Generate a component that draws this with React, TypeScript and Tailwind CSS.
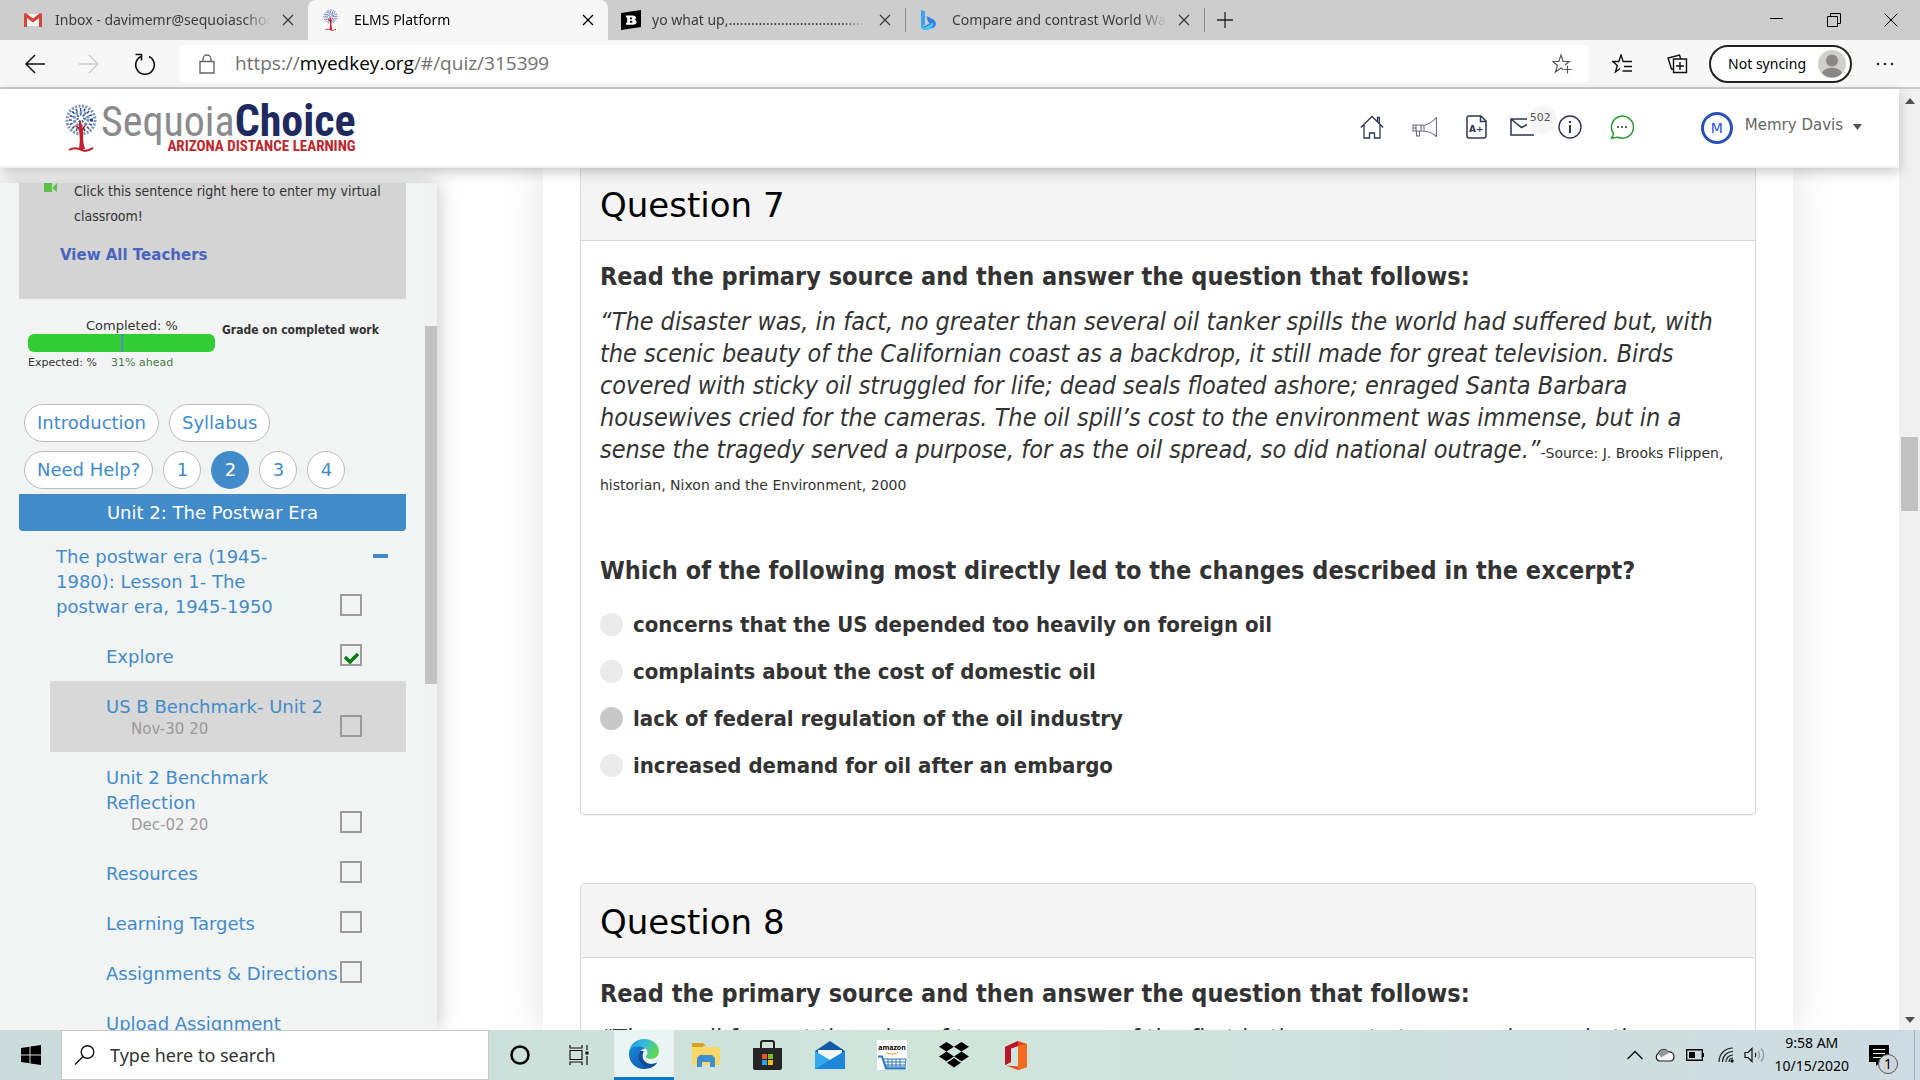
import type { ReactNode } from 'react';

const lessons = [
  { title: 'Explore', done: true },
  { title: 'US B Benchmark- Unit 2', date: 'Nov-30 20', active: true },
  { title: 'Unit 2 Benchmark Reflection', date: 'Dec-02 20' },
  { title: 'Resources' },
  { title: 'Learning Targets' },
  { title: 'Assignments & Directions' },
  { title: 'Upload Assignment', date: 'Dec-04 20' },
];

const options = [
  'concerns that the US depended too heavily on foreign oil',
  'complaints about the cost of domestic oil',
  'lack of federal regulation of the oil industry',
  'increased demand for oil after an embargo',
];

function CloseIcon() {
  return (
    <svg className="size-3" viewBox="0 0 12 12" fill="none" stroke="currentColor" strokeWidth="1.3">
      <path d="M1 1l10 10M11 1L1 11" />
    </svg>
  );
}

function TreeIcon({ className }: { className: string }) {
  return (
    <svg className={className} viewBox="0 0 32 48" fill="none">
      <circle cx="16" cy="16" r="14" stroke="#7c93bd" strokeWidth="3" strokeDasharray="2 1.5" />
      <circle cx="16" cy="16" r="10.500" stroke="#2c4a8c" strokeWidth="3" strokeDasharray="1.5 2.5" />
      <circle cx="16" cy="15" r="7" stroke="#6f8fc4" strokeWidth="3" strokeDasharray="2.500 2" />
      <circle cx="16" cy="14" r="3.500" stroke="#3b5998" strokeWidth="2.500" strokeDasharray="1.500 1.500" />
      <path d="M14 45c1-7 1-12 0-19l-5-5 5 2v-6h2l1 7 5-5-4 8c0 7 0 12 2 18z" fill="#c5202e" />
      <path d="M4 46c5-3 9-2 13 0s7 0 11-2" stroke="#c5202e" strokeWidth="2" />
    </svg>
  );
}

function GmailIcon() {
  return (
    <svg className="h-[14px] w-[18px]" viewBox="0 0 18 14">
      <path d="M1 1h16v12H1z" fill="#f2f2f2" />
      <path d="M0 1.500V14h3V5l6 4.500L15 5v9h3V1.500C18 0 16.500-.2 15.500.6L9 5.500 2.500.6C1.500-.2 0 0 0 1.500z" fill="#d5433a" />
    </svg>
  );
}

function BTabIcon() {
  return (
    <svg className="size-5" viewBox="0 0 20 20">
      <path d="M0 3l20-3v17L0 20z" fill="#000" />
      <path d="M5 5.500h6.500c2.500 0 3.500 1 3.500 2.300 0 1-.6 1.700-1.500 2 1.200.3 2 1.100 2 2.300 0 1.700-1.300 2.700-3.800 2.700H5v-2h1.200V7.500H5zm4 2v1.700h1.200c1.300 0 1.300-1.700 0-1.700zm0 3.300v2h1.500c1.400 0 1.400-2 0-2z" fill="#fff" />
    </svg>
  );
}

function BingIcon() {
  return (
    <svg className="h-5 w-[15px]" viewBox="0 0 15 20">
      <path d="M0 0l4 1.500V15L0 17z" fill="#37a3f0" />
      <path d="M5.500 6l7 3.500c3 2 3 6 .5 8L6 20c-3 0-5-1-6-3l4-1 5-3-2-1z" fill="#2f7fe8" />
      <path d="M0 16c1 2 4 2 6 .500l6-4c1 3-1 6-6 7.500-3 0-5-1-6-4z" fill="#45c8f5" />
    </svg>
  );
}

type TabProps = { icon: ReactNode; title: string; className: string; active?: boolean };

function Tab({ icon, title, className, active }: TabProps) {
  return (
    <div className={`flex h-10 items-center pr-[14px] text-sm ${active ? 'rounded-t-lg bg-[#f7f7f7] text-black' : 'text-[#3c3c3c]'} ${className}`}>
      <span className="flex w-[31px] shrink-0 items-center">{icon}</span>
      <span className="mr-3 flex-1 overflow-hidden whitespace-nowrap [mask-image:linear-gradient(to_right,black_88%,transparent)]">
        {title}
      </span>
      <button aria-label={`Close ${title}`}>
        <CloseIcon />
      </button>
    </div>
  );
}

function TabBar() {
  return (
    <div className="flex h-10 shrink-0 items-center bg-[#cdcdcd] text-black">
      <Tab icon={<GmailIcon />} title="Inbox - davimemr@sequoiaschools.org" className="w-[308px] pl-6" />
      <Tab icon={<TreeIcon className="h-[22px] w-[15px] bg-white" />} title="ELMS Platform" className="w-[300px] pl-[15px]" active />
      <Tab icon={<BTabIcon />} title="yo what up,.............................................................." className="w-[297px] pl-[13px]" />
      <div className="h-6 w-px bg-[#8a8a8a]" />
      <Tab icon={<BingIcon />} title="Compare and contrast World War I and World War II" className="w-[298px] pl-[15px]" />
      <div className="h-6 w-px bg-[#8a8a8a]" />
      <button aria-label="New tab" className="ml-3">
        <svg className="size-4" viewBox="0 0 16 16" stroke="#222" strokeWidth="1.300">
          <path d="M8 0v16M0 8h16" />
        </svg>
      </button>
      <div className="mr-[22px] ml-auto flex items-center gap-[43px]">
        <button aria-label="Minimize">
          <svg className="size-[14px]" viewBox="0 0 14 14" stroke="#000"><path d="M0 5.500h13" /></svg>
        </button>
        <button aria-label="Restore">
          <svg className="size-[14px]" viewBox="0 0 14 14" fill="none" stroke="#000"><path d="M.5 3.500h10v10H.5zM3.500 3V.5h10v10H11" /></svg>
        </button>
        <button aria-label="Close window">
          <svg className="size-[14px]" viewBox="0 0 14 14" stroke="#000"><path d="M.5.5l13 13M13.500.5l-13 13" /></svg>
        </button>
      </div>
    </div>
  );
}

function Toolbar() {
  return (
    <div className="flex h-[49px] shrink-0 items-center border-b-2 border-[#ccc] bg-[#f7f7f7] pr-[26px] pl-[25px]">
      <button aria-label="Back" className="mr-[34px]">
        <svg className="h-5 w-5" viewBox="0 0 20 20" fill="none" stroke="#111" strokeWidth="1.500"><path d="M20 10H1M10 1l-9 9 9 9" /></svg>
      </button>
      <button aria-label="Forward" className="mr-[35px]" disabled>
        <svg className="h-5 w-5" viewBox="0 0 20 20" fill="none" stroke="#ccc" strokeWidth="1.500"><path d="M0 10h19M10 1l9 9-9 9" /></svg>
      </button>
      <button aria-label="Refresh" className="mr-6">
        <svg className="h-[22px] w-[22px]" viewBox="0 0 22 22" fill="none" stroke="#111" strokeWidth="1.600"><path d="M7 3.500A9.300 9.300 0 1 0 15 3.500M1.500 1.500h6v6" /></svg>
      </button>
      <div className="flex h-[38px] flex-1 items-center rounded bg-white pr-4 pl-[19px]">
        <svg className="mr-5 h-5 w-4" viewBox="0 0 16 20" fill="none" stroke="#666" strokeWidth="1.400"><path d="M1 7.500h14V19H1zM4 7.500V5a4 4 0 0 1 8 0v2.500" /></svg>
        <a href="#quiz" className="text-[19px] text-[#707070] font-['Open_Sans',sans-serif]">
          https://<span className="text-black">myedkey.org</span>/#/quiz/315399
        </a>
        <button aria-label="Add to favorites" className="ml-auto">
          <svg className="size-5" viewBox="0 0 20 20" fill="none" stroke="#555" strokeWidth="1.200"><path d="M11 15.500L9 14l-5.500 4 2-6.500L.8 7.500h6L9 1l2.200 6.500h6L13 11M15.500 11.500v8M11.500 15.500h8" /></svg>
        </button>
      </div>
      <button aria-label="Favorites" className="ml-6">
        <svg className="h-5 w-[21px]" viewBox="0 0 21 20" fill="none" stroke="#111" strokeWidth="1.400"><path d="M8 14.500L3.500 18l1.800-6.500L.8 7.500h6L9 1l2.200 6.500H20M12 12.500h8M10.500 17H20" /></svg>
      </button>
      <button aria-label="Collections" className="ml-[34px]">
        <svg className="h-5 w-[21px]" viewBox="0 0 21 20" fill="none" stroke="#111" strokeWidth="1.400"><path d="M6.500 5h13v13.500h-13zM13 8v8M9 12h8M6 15H4.500L1 4l11.500-3 1 3.500" /></svg>
      </button>
      <button className="ml-[21px] flex h-[38px] items-center gap-3 rounded-full border-2 border-[#222] bg-white pr-1 pl-[17px] text-sm text-black">
        Not syncing
        <svg className="size-7" viewBox="0 0 28 28"><circle cx="14" cy="14" r="14" fill="#d0cfcc" /><circle cx="14" cy="10.500" r="6" fill="#8a8886" /><path d="M4 23c3-7 17-7 20 0-5 6-15 6-20 0z" fill="#8a8886" /></svg>
      </button>
      <button aria-label="Settings" className="ml-6">
        <svg className="h-1 w-[18px]" viewBox="0 0 18 4" fill="#222"><circle cx="2" cy="2" r="1.300" /><circle cx="9" cy="2" r="1.300" /><circle cx="16" cy="2" r="1.300" /></svg>
      </button>
    </div>
  );
}

function SiteHeader() {
  return (
    <header className="relative z-10 flex h-[79px] shrink-0 items-center border-b-2 border-[#f2f2f2] bg-white pr-[37px] pl-[65px] shadow-[0_4px_12px_rgba(0,0,0,0.22)]">
      <a href="#home" className="flex items-center font-['Roboto_Condensed',sans-serif]" aria-label="Sequoia Choice">
        <TreeIcon className="mr-1 h-12 w-8" />
        <span className="flex flex-col items-end">
          <span className="text-[42px] leading-9 text-[#8a8b8d]">
            Sequoia<b className="text-[44px] leading-9 text-[#1f2b5f]">Choice</b>
          </span>
          <span className="text-[15px] leading-3 font-bold text-[#c0272d]">ARIZONA DISTANCE LEARNING</span>
        </span>
      </a>
      <nav className="ml-auto flex items-center pb-0.5 text-[#2e3650]">
        <button aria-label="Home" className="mr-7">
          <svg className="size-6" viewBox="0 0 24 24" fill="none" stroke="currentColor" strokeWidth="1.300"><path d="M.8 12.500L12 1.500l11.200 11M4 10v13h5.500v-5h5v5H20V10M17.500 6.500V2.500h1.800v6" /></svg>
        </button>
        <button aria-label="Announcements" className="mr-7">
          <svg className="h-5 w-[26px]" viewBox="0 0 26 20" fill="none" stroke="#666c80" strokeWidth="1.100"><path d="M1 8h8v6H1zM9 8.500c6 0 11-3 15.500-8v19c-4-4-9-5.500-15.500-5.500M4.500 14v5h3v-5M4 8v6M12 8v5.500M1 11h3M24.500 6v7" /></svg>
        </button>
        <button aria-label="Grades" className="relative mr-[23px]">
          <svg className="h-6 w-[21px]" viewBox="0 0 21 24" fill="none" stroke="currentColor" strokeWidth="1.500"><path d="M3 1h12l5 5v15a2 2 0 0 1-2 2H3a2 2 0 0 1-2-2V3a2 2 0 0 1 2-2zM14.500 1v5.500H20" /></svg>
          <span className="absolute inset-x-0 top-2 text-center text-[9px] leading-3 font-bold">A+</span>
        </button>
        <button aria-label="Messages" className="relative w-12 text-left">
          <svg className="h-[18px] w-[25px]" viewBox="0 0 25 18" fill="none" stroke="currentColor" strokeWidth="1.500"><path d="M17 1H1v16h23M1 1l10.500 8.500L17 6.500" /></svg>
          <span className="absolute -top-3 left-[19px] size-7 rounded-full bg-[#f5f5f5] pt-1 pl-px text-[11px] leading-4 text-[#555]">502</span>
        </button>
        <button aria-label="Information" className="mr-7">
          <svg className="size-6" viewBox="0 0 24 24" fill="none" stroke="currentColor" strokeWidth="1.400"><circle cx="12" cy="12" r="11" /><path d="M12 10v8M12 6v2" strokeWidth="2" /></svg>
        </button>
        <button aria-label="Chat" className="mr-[67px]">
          <svg className="size-6" viewBox="0 0 24 24" fill="none" stroke="#26992e" strokeWidth="1.500"><path d="M3.500 18.500A11 11 0 1 1 8 22.200L1 23.200c1.800-1.200 2.300-2.700 2.500-4.700z" /><path d="M7 12h2M11 12h2M15 12h2" stroke="#333" /></svg>
        </button>
      </nav>
      <button className="flex items-center text-[15px] text-[#666]">
        <span className="mr-3 flex size-8 items-center justify-center rounded-full border-3 border-[#2b50b5] text-sm text-[#2b50e0]">M</span>
        <span className="pb-1">Memry Davis</span>
        <svg className="mb-0.5 ml-[10px] h-[6px] w-[9px]" viewBox="0 0 9 6" fill="#555"><path d="M0 0h9L4.500 6z" /></svg>
      </button>
    </header>
  );
}

function CheckBox({ label, checked }: { label: string; checked?: boolean }) {
  return (
    <span className="relative mb-[3px] size-[22px] shrink-0">
      <input type="checkbox" aria-label={label} defaultChecked={checked} className="peer block size-[22px] appearance-none border-2 border-[#9b9b9b]" />
      <svg className="absolute top-2 left-1 hidden h-3 w-[15px] peer-checked:block" viewBox="0 0 15 12" fill="none" stroke="#0a7a12" strokeWidth="3.500">
        <path d="M1 5l5 5 8-8" />
      </svg>
    </span>
  );
}

function Sidebar() {
  const pill = 'h-[38px] rounded-full border border-[#bbb] bg-white px-3';
  const round = 'size-[38px] rounded-full border border-[#bbb] bg-white';

  return (
    <aside className="mt-[15px] flex w-[437px] shrink-0 bg-[#f2f4f4] shadow-[0_0_20px_rgba(0,0,0,0.25)]">
      <div className="flex-1 overflow-hidden px-[19px]">
        <div className="-mt-1 bg-[#d4d4d4] pb-[31px]">
          <a href="#classroom" className="flex pr-4 pl-[25px] text-sm leading-[25px] text-[#333] font-['DejaVu_Sans_Condensed',sans-serif]">
            <svg className="mt-1 mr-[17px] h-[9px] w-[13px] shrink-0" viewBox="0 0 13 9" fill="#5cc04a"><path d="M0 0h8v9H0zM9 4l4-4v9L9 6z" /></svg>
            Click this sentence right here to enter my virtual classroom!
          </a>
          <a href="#teachers" className="mt-[14px] ml-[41px] block text-[15px] leading-[25px] font-bold text-[#4a63c0]">View All Teachers</a>
        </div>

        <div className="mt-[19px] flex pl-[9px] text-[#333]">
          <div className="w-[187px]">
            <p className="pl-[58px] text-[13px] leading-4">Completed: %</p>
            <div className="flex h-[18px] justify-center rounded-md bg-[#32cd32]">
              <div className="h-full w-0.5 bg-[#4a90c0]" />
            </div>
            <p className="mt-px flex gap-[14px] text-[11px] leading-5">
              <span>Expected: %</span>
              <span className="text-[#4a7a4c]">31% ahead</span>
            </p>
          </div>
          <p className="mt-1 ml-[7px] text-xs leading-4 font-bold font-['DejaVu_Sans_Condensed',sans-serif]">Grade on completed work</p>
        </div>

        <div className="mt-[31px] flex flex-col gap-[9px] pl-[5px] text-lg text-[#428bca]">
          <div className="flex gap-[10px]">
            <button className={pill}>Introduction</button>
            <button className={pill}>Syllabus</button>
          </div>
          <div className="flex gap-[10px]">
            <button className={pill}>Need Help?</button>
            <button className={round}>1</button>
            <button className="size-[38px] rounded-full bg-[#428bca] text-white">2</button>
            <button className={round}>3</button>
            <button className={round}>4</button>
          </div>
        </div>

        <h2 className="mt-[5px] rounded-b-sm bg-[#428bca] text-center text-lg leading-[37px] text-white">Unit 2: The Postwar Era</h2>

        <div className="flex items-end justify-between pt-[13px] pb-3 pl-[37px] text-lg leading-[25px] text-[#428bca]">
          <a href="#lesson" className="w-[224px]">The postwar era (1945-1980): Lesson 1- The postwar era, 1945-1950</a>
          <span className="flex items-end self-stretch">
            <CheckBox label="Lesson 1" />
            <button aria-label="Collapse lesson" className="mt-[10px] mr-[18px] ml-[11px] h-1 w-[15px] self-start bg-[#428bca]" />
          </span>
        </div>

        <ul className="ml-[31px] text-lg leading-[25px] text-[#428bca]">
          {lessons.map((l) => (
            <li key={l.title} className={`flex items-end pt-[13px] pr-11 pb-3 pl-14 ${l.active ? 'bg-[#d8d8d8]' : ''}`}>
              <div className="flex-1">
                <a href="#item" className="block">{l.title}</a>
                {l.date && <p className="pl-[25px] text-[15px] leading-[21px] text-[#9a9a9a]">{l.date}</p>}
              </div>
              <CheckBox label={l.title} checked={l.done} />
            </li>
          ))}
        </ul>
      </div>
      <div className="w-3 bg-[#f1f2f2] pt-[143px]">
        <div className="h-[358px] bg-[#c1c1c1]" />
      </div>
    </aside>
  );
}

function QuestionCard({ title, children }: { title: string; children: ReactNode }) {
  return (
    <section className="rounded border border-[#d8d8d8] bg-white text-[25px] leading-8 text-[#333] shadow-[0_1px_1px_rgba(0,0,0,0.05)] font-['DejaVu_Sans_Condensed',sans-serif]">
      <h2 className="flex h-[74px] items-center border-b border-[#d8d8d8] bg-[#f4f4f4] px-[19px] pt-0.5 text-[34px] text-black font-['DejaVu_Sans',sans-serif]">{title}</h2>
      <div className="px-[19px] pt-5 pb-[25px]">{children}</div>
    </section>
  );
}

function Quiz() {
  return (
    <main className="mx-[106px] flex-1 bg-white px-[37px] shadow-[0_0_40px_rgba(0,0,0,0.12)]">
      <div className="-mt-0.5 flex flex-col gap-[68px]">
        <QuestionCard title="Question 7">
          <p className="font-bold">Read the primary source and then answer the question that follows:</p>
          <p className="mt-[13px]">
            <i>
              “The disaster was, in fact, no greater than several oil tanker spills the world had suffered but, with the
              scenic beauty of the Californian coast as a backdrop, it still made for great television. Birds covered with
              sticky oil struggled for life; dead seals floated ashore; enraged Santa Barbara housewives cried for the
              cameras. The oil spill’s cost to the environment was immense, but in a sense the tragedy served a purpose,
              for as the oil spread, so did national outrage.”
            </i>
            <span className="text-sm leading-4 font-['DejaVu_Sans',sans-serif]">
              -Source: J. Brooks Flippen, historian, Nixon and the Environment, 2000
            </span>
          </p>
          <fieldset className="mt-[57px] font-bold">
            <legend>Which of the following most directly led to the changes described in the excerpt?</legend>
            <div className="mt-[14px]">
              {options.map((o, i) => (
                <label key={o} className="flex h-[47px] items-center gap-[10px] text-[22px]">
                  <input
                    type="radio"
                    name="q7"
                    defaultChecked={i === 2}
                    className="size-[23px] shrink-0 appearance-none rounded-full bg-[#ebebeb] checked:bg-[#c8c8c8]"
                  />
                  {o}
                </label>
              ))}
            </div>
          </fieldset>
        </QuestionCard>

        <QuestionCard title="Question 8">
          <p className="font-bold">Read the primary source and then answer the question that follows:</p>
          <p className="mt-[13px] italic">
            “The small farm at the edge of town was one of the first in the county to see a change in the way</p>
        </QuestionCard>
      </div>
    </main>
  );
}

function PageScrollbar() {
  return (
    <div className="flex w-[21px] shrink-0 flex-col items-center bg-[#f0f0f0] pt-[9px] pb-[7px]">
      <svg className="h-[6px] w-[10px]" viewBox="0 0 10 6" fill="#505050"><path d="M0 6h10L5 0z" /></svg>
      <div className="mt-[333px] h-[74px] w-[17px] bg-[#c1c1c1]" />
      <svg className="mt-auto h-[6px] w-[10px]" viewBox="0 0 10 6" fill="#505050"><path d="M0 0h10L5 6z" /></svg>
    </div>
  );
}

function Taskbar() {
  return (
    <footer className="relative z-20 flex h-[50px] shrink-0 items-center bg-linear-to-r from-[#cbdbdb] via-[#cfe5db] to-[#cddbe2] text-black">
      <button aria-label="Start" className="flex w-[61px] justify-center">
        <svg className="size-5" viewBox="0 0 20 20"><path d="M0 3l8.500-1.300v7.800H0zM9.500 1.500L20 0v9.500H9.500zM0 10.500h8.500v7.800L0 17zM9.500 10.500H20V20L9.500 18.500z" /></svg>
      </button>
      <label className="flex h-full w-[428px] items-center border border-[#c8c8c8] bg-white pl-3">
        <svg className="mr-[15px] h-5 w-[21px]" viewBox="0 0 21 20" fill="none" stroke="#111" strokeWidth="1.400"><circle cx="13.500" cy="7" r="6.300" /><path d="M9 11.500L1 19.500" /></svg>
        <input type="text" aria-label="Search" placeholder="Type here to search" className="flex-1 text-lg outline-none placeholder:text-[#333]" />
      </label>
      <button aria-label="Cortana" className="ml-[21px]">
        <svg className="size-5" viewBox="0 0 20 20" fill="none" stroke="#000" strokeWidth="2.500"><circle cx="10" cy="10" r="8.500" /></svg>
      </button>
      <button aria-label="Task view" className="ml-[39px]">
        <svg className="size-5" viewBox="0 0 20 20" fill="none" stroke="#111" strokeWidth="1.200"><path d="M1 5.500h12v9H1zM1 0v3h12V0M1 20v-3h12v3M18 0v5M18 11v9" /><path d="M16.500 6.500h3v3h-3z" fill="#000" stroke="none" /></svg>
      </button>
      <button aria-label="Edge" className="ml-[25px] flex h-full w-[60px] items-center justify-center border-b-3 border-[#0a78c8] bg-[#eaf4f3]">
        <svg className="size-[30px]" viewBox="0 0 30 30">
          <defs>
            <linearGradient id="edgeTop" x1="0" x2="1" y1="0" y2="0.400"><stop offset="0" stopColor="#1b8fdc" /><stop offset="0.500" stopColor="#33bde0" /><stop offset="1" stopColor="#5fd657" /></linearGradient>
            <linearGradient id="edgeLow" x1="0" x2="1" y1="0" y2="1"><stop offset="0" stopColor="#1789d8" /><stop offset="1" stopColor="#0c4fa0" /></linearGradient>
          </defs>
          <path d="M0 15C0 5 8 0 15 0c9 0 15 6 15 12 0 5-4 8-8 8-3 0-5-1-5-2.500 0-1 1.500-1.500 1.500-4C18.500 10 15 7 10 7 4 7 0 12 0 15z" fill="url(#edgeTop)" />
          <path d="M0 15c0-5 4-8 10-8 3 0 5 1 6.500 2.500C12 10 10 13 10 17c0 5 5 9 11 9 3 0 5-1 7-2.500C25 28 20 30 15 30 6 30 0 23 0 15z" fill="url(#edgeLow)" />
          <path d="M11 12c-4 8 2 16 10 17 3-1 6-3 7-5.500-4 2-9 2-12-1-3-3-3-7-1-10.500z" fill="#0d4c97" />
        </svg>
      </button>
      <button aria-label="File Explorer" className="ml-[18px]">
        <svg className="h-6 w-7" viewBox="0 0 28 24"><path d="M0 0h11l3 3h-3v3H0z" fill="#d9a01c" /><path d="M0 4h26l2 2v16H0z" fill="#fbd768" /><path d="M5 24v-9l3-3h12l3 3v9h-5v-5h-8v5z" fill="#3e8fd0" /></svg>
      </button>
      <button aria-label="Store" className="ml-[33px]">
        <svg className="h-[30px] w-[29px]" viewBox="0 0 29 30"><path d="M8 9V3a2 2 0 0 1 2-2h9a2 2 0 0 1 2 2v6" fill="none" stroke="#222" strokeWidth="2" /><path d="M0 8h29v20a2 2 0 0 1-2 2H2a2 2 0 0 1-2-2z" fill="#262626" /><path d="M9 14h5v5H9z" fill="#f0502a" /><path d="M15 14h5v5h-5z" fill="#7fba1e" /><path d="M9 20h5v5H9z" fill="#25a5ef" /><path d="M15 20h5v5h-5z" fill="#fbb915" /></svg>
      </button>
      <button aria-label="Mail" className="ml-[33px]">
        <svg className="h-[28px] w-[30px]" viewBox="0 0 30 28"><path d="M0 10L15 0l15 10v6H0z" fill="#0f5aa8" /><path d="M3 9h24v10H3z" fill="#f4f7fa" /><path d="M0 10l15 9L30 10v18H0z" fill="#33a9ec" /><path d="M0 28l30-18v18z" fill="#1c86d8" /></svg>
      </button>
      <button aria-label="Amazon" className="ml-8 flex h-[30px] w-[30px] flex-col items-center bg-white pt-1">
        <span className="text-[7px] leading-2 font-bold">amazon</span>
        <svg className="h-[18px] w-[30px]" viewBox="0 0 30 18" fill="none" stroke="#2a78b8"><path d="M9 .5c4 2 8 2 12 0" stroke="#f2941c" /><path d="M1 4.500h4l4 12h20" strokeWidth="2" /><path d="M6 7h23l-1 8H9zM7 10h22M8 13h20M11 7v8M15 7v8M19 7v8M23 7v8" /></svg>
      </button>
      <button aria-label="Dropbox" className="ml-8">
        <svg className="h-[26px] w-[30px]" viewBox="0 0 30 26"><path d="M7.500 0L15 4.800 7.500 9.600 0 4.800zM22.500 0L30 4.800l-7.500 4.800L15 4.800zM7.500 9.600l7.500 4.800-7.500 4.800L0 14.400zM22.500 9.600l7.500 4.800-7.500 4.800-7.500-4.800zM15 16l7 4.800-7 4.800-7-4.800z" /></svg>
      </button>
      <button aria-label="Office" className="ml-[35px]">
        <svg className="h-[29px] w-6" viewBox="0 0 24 29"><path d="M14 0l9 3v23l-9 3L2 24.500l12 1V5L7 7.500V21l-6 3V6z" fill="#e8461a" /><path d="M14 0L1 6v18l6-3V7.500L14 5z" fill="#b7152a" /><path d="M14 5l9-2v23l-9 3z" fill="#f26b21" /></svg>
      </button>

      <div className="ml-auto flex items-center">
        <svg className="mr-3 h-[10px] w-4" viewBox="0 0 16 10" fill="none" stroke="#111" strokeWidth="1.400"><path d="M.5 9L8 1.500 15.500 9" /></svg>
        <svg className="mr-[11px] h-[14px] w-5" viewBox="0 0 20 14" stroke="#222" strokeWidth="1.200"><path d="M4.500 13a4 4 0 0 1-1-7.500C4.500 1 11 0 13 4c4-.5 6 2 6 4.500s-1.500 4.500-4 4.500z" fill="#f4f4f4" /><path d="M3.500 6C5 1 11 0 13 4l2 .2L6 9.500z" fill="#999" stroke="none" /></svg>
        <svg className="mr-[14px] h-3 w-[18px]" viewBox="0 0 18 12" fill="none" stroke="#000" strokeWidth="1.400"><path d="M.7.7h15.600v10.600H.7zM17.300 4v4" /><path d="M3 3h6v6H3z" fill="#000" stroke="none" /></svg>
        <svg className="mr-[10px] size-4" viewBox="0 0 16 16" fill="none" stroke="#222" strokeWidth="1.200"><path d="M1 15C1 7 7 1 15 1M4.500 15c0-6 4.500-10.500 10.500-10.500M8 15c0-4 3-7 7-7M11 15c0-2.500 1.500-4 4-4" /><circle cx="14" cy="14" r="1.700" fill="#111" stroke="none" /></svg>
        <svg className="mr-[10px] h-4 w-[21px]" viewBox="0 0 21 16" fill="none" stroke="#111" strokeWidth="1.200"><path d="M1 5.500h3L8 1.500v13l-4-4H1zM11 6c1 1 1 3 0 4" /><path d="M14 4c2 2 2 6 0 8M17 1.500c3.500 3.500 3.500 9.500 0 13" stroke="#8a9494" /></svg>
        <div className="mr-5 pb-0.5 text-center text-sm leading-[23px]">
          <p>9:58 AM</p>
          <p>10/15/2020</p>
        </div>
        <button aria-label="Notifications" className="relative mr-[25px]">
          <svg className="h-[21px] w-5" viewBox="0 0 20 21"><path d="M0 0h20v17h-8l-5 4v-4H0z" /><path d="M4 4.500h12M4 8.500h12M4 12.500h8" stroke="#fff" /></svg>
          <span className="absolute top-[9px] left-[9px] flex size-5 items-center justify-center rounded-full border border-[#555] bg-[#cfd6d9] text-sm">1</span>
        </button>
        <div className="mr-[5px] h-[50px] w-px bg-[#9fb0b5]" />
      </div>
    </footer>
  );
}

export default function App() {
  return (
    <div className="flex h-screen flex-col overflow-hidden bg-white font-['Noto_Sans',sans-serif]">
      <TabBar />
      <Toolbar />
      <div className="flex min-h-0 flex-1 font-['DejaVu_Sans',sans-serif]">
        <div className="flex min-w-0 flex-1 flex-col">
          <SiteHeader />
          <div className="flex min-h-0 flex-1 overflow-hidden">
            <Sidebar />
            <Quiz />
          </div>
        </div>
        <PageScrollbar />
      </div>
      <Taskbar />
    </div>
  );
}
